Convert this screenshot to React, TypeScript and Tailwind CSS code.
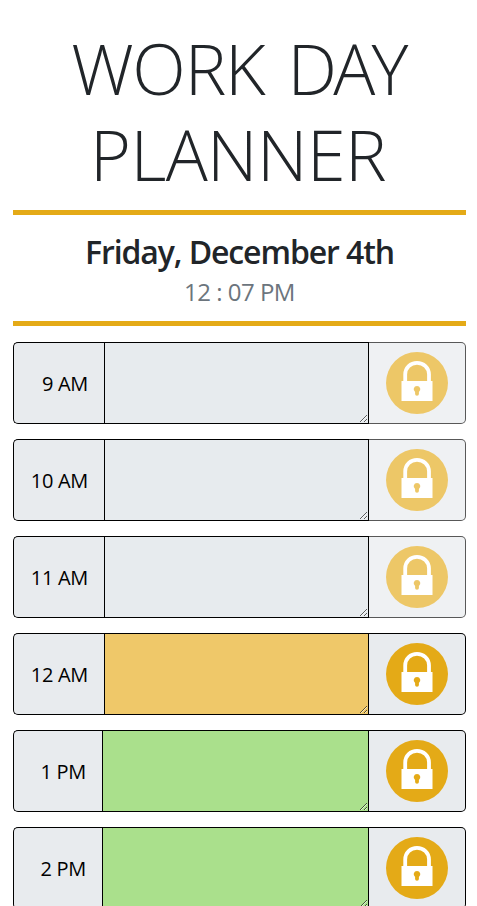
type Slot = { label: string; state: 'past' | 'present' | 'future' };

const slots: Slot[] = [
  { label: '9 AM', state: 'past' },
  { label: '10 AM', state: 'past' },
  { label: '11 AM', state: 'past' },
  { label: '12 AM', state: 'present' },
  { label: '1 PM', state: 'future' },
  { label: '2 PM', state: 'future' },
];

const fills = {
  past: 'bg-[#e7ebee]',
  present: 'bg-[#efc869]',
  future: 'bg-[#aae08c]',
};

function LockIcon() {
  return (
    <svg viewBox="0 0 62 62" className="block h-[62px] w-[62px]">
      <circle cx="31" cy="31" r="31" fill="#e4aa17" />
      <path d="M19.2 30V22.5C19.2 15.5 24.5 10.8 31 10.8S43 15.5 43 22.5V30" fill="none" stroke="#fff" strokeWidth="3.8" />
      <rect x="15.5" y="29" width="31" height="20" fill="#fff" />
      <path d="M31 34a3.3 3.3 0 0 0-1.9 6v2q0 1.8 1.9 1.8t1.9-1.8v-2A3.3 3.3 0 0 0 31 34z" fill="#e4aa17" />
    </svg>
  );
}

function Row({ label, state }: Slot) {
  return (
    <div className="flex h-[82px]">
      <div
        className={`flex shrink-0 items-center justify-end rounded-l-[5px] border border-r-0 border-black bg-[#e8ebee] pt-0.5 text-[20px] text-black ${
          state === 'future' ? 'w-[89px] pr-4' : 'w-[91px] pr-4'
        }`}
      >
        <span className="font-normal tracking-[-0.3px]">{label}</span>
      </div>
      <textarea
        aria-label={label}
        className={`block h-[82px] min-w-0 flex-1 resize-y overflow-hidden border border-black outline-none ${fills[state]}`}
      />
      <button
        type="button"
        aria-label="Save"
        className={`flex w-[97px] shrink-0 items-center justify-center rounded-r-[5px] border border-l-0 border-black bg-[#e8ebee] ${
          state === 'past' ? 'opacity-65' : ''
        }`}
      >
        <LockIcon />
      </button>
    </div>
  );
}

export default function App() {
  return (
    <div className="h-[906px] overflow-hidden bg-white pr-[11px] pl-[13px] font-['Open_Sans','Noto_Sans',sans-serif]">
      <header className="text-center text-[#212529]">
        <h1 className="h-[210px] pt-[25px] text-[70px] leading-[86px] font-light">
          <span className="block pr-[3px] tracking-[-1.2px] [word-spacing:6px]">
            <span>WORK </span>
            <span className="tracking-[-3.7px]">DAY</span>
          </span>
          <span className="block pr-[3px] tracking-[-0.6px]">PLANNER</span>
        </h1>
        <div className="h-[116px] border-y-[5px] border-[#e4aa17] pt-[18px]">
          <h2 className="text-[32px] leading-[38px] font-semibold tracking-[-1.1px]">Friday, December 4th</h2>
          <p className="mt-[6px] text-[24px] leading-[29px] font-normal tracking-[-0.5px] text-[#6c757d]">12 : 07 PM</p>
        </div>
      </header>
      <main className="mt-4 flex flex-col gap-[15px]">
        {slots.map((slot) => (
          <Row key={slot.label} {...slot} />
        ))}
      </main>
    </div>
  );
}
